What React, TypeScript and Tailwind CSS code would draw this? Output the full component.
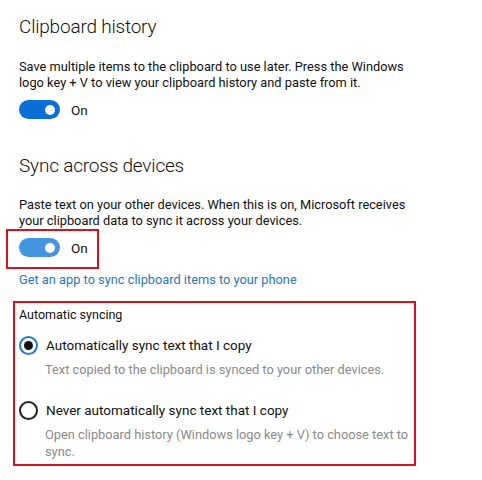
import type { ReactNode } from "react";

const FONT = "font-['Roboto','Noto_Sans',sans-serif]";

function Toggle({ tone }: { tone: "solid" | "light" }) {
  return (
    <div className="flex items-center gap-[11px]">
      <div
        className={`flex h-[19px] w-[41px] items-center justify-end rounded-full pr-[5px] ${
          tone === "solid" ? "bg-[#0a6fd6]" : "bg-[#4596e0]"
        }`}
      >
        <div className="h-[10px] w-[10px] rounded-full bg-white" />
      </div>
      <span className="text-[13.5px] leading-[16px] text-[#111]">On</span>
    </div>
  );
}

function Radio({ checked, label }: { checked?: boolean; label: string }) {
  return (
    <div className="flex h-[20px] items-center gap-[8px]">
      <div
        className={`flex h-[19px] w-[19px] items-center justify-center rounded-full border-2 ${
          checked ? "border-[#1f79cf]" : "border-[#222]"
        }`}
      >
        {checked && <div className="h-[9px] w-[9px] rounded-full bg-[#111]" />}
      </div>
      <span className="text-[13.5px] leading-[16px] text-[#111]">{label}</span>
    </div>
  );
}

function Title({ children }: { children: ReactNode }) {
  return <h2 className="text-[19px] font-light leading-[28px] tracking-[-0.2px] text-[#111]">{children}</h2>;
}

export default function App() {
  return (
    <div className={`h-[480px] w-[482px] bg-white pl-[19px] pt-[13px] ${FONT}`}>
      {/* Clipboard history */}
      <Title>Clipboard history</Title>
      <p className="mt-[18px] w-[400px] text-[12.8px] leading-[16px] text-[#111]">
        Save multiple items to the clipboard to use later. Press the Windows logo key + V to view your clipboard
        history and paste from it.
      </p>
      <div className="mt-[9px]">
        <Toggle tone="solid" />
      </div>

      {/* Sync across devices */}
      <div className="mt-[33px]">
        <Title>Sync across devices</Title>
      </div>
      <p className="mt-[17px] w-[400px] text-[12.8px] leading-[16px] text-[#111]">
        Paste text on your other devices. When this is on, Microsoft receives your clipboard data to sync it across
        your devices.
      </p>
      <div className="ml-[-13px] mt-[0px] w-[93px] border-2 border-[#d8111c] pb-[10px] pl-[11px] pt-[7px]">
        <Toggle tone="light" />
      </div>
      <a className="mt-[3px] block text-[12.8px] leading-[16px] text-[#2878c2]">
        Get an app to sync clipboard items to your phone
      </a>

      <div className="ml-[-6px] mt-[13px] w-[403px] border-2 border-[#d8111c] pb-[4px] pl-[4px] pt-[4px]">
        <p className="text-[12.5px] leading-[16px] text-[#111]">Automatic syncing</p>
        <div className="mt-[12px]">
          <Radio checked label="Automatically sync text that I copy" />
        </div>
        <p className="ml-[26px] mt-[7px] text-[12.8px] leading-[16px] text-[#8a8a8a]">
          Text copied to the clipboard is synced to your other devices.
        </p>
        <div className="mt-[22px]">
          <Radio label="Never automatically sync text that I copy" />
        </div>
        <p className="ml-[26px] mt-[6px] w-[370px] text-[12.8px] leading-[17px] text-[#8a8a8a]">
          Open clipboard history (Windows logo key + V) to choose text to sync.
        </p>
      </div>
    </div>
  );
}
